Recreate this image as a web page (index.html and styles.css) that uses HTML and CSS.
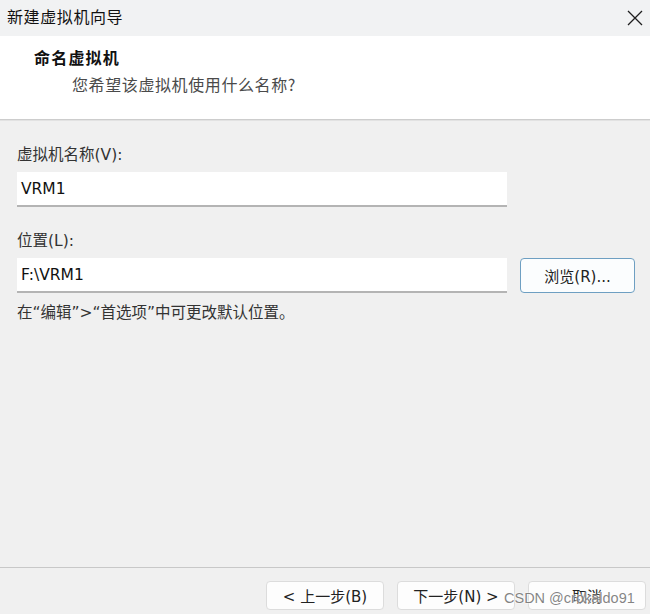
FILE: index.html
```html
<!DOCTYPE html>
<html lang="zh-CN">
<head>
<meta charset="utf-8">
<title>新建虚拟机向导</title>
<link rel="stylesheet" href="styles.css">
</head>
<body>
<div class="window">
  <div class="titlebar">
    <span class="title">新建虚拟机向导</span>
    <svg class="close" width="16" height="16" viewBox="0 0 16 16" aria-hidden="true">
      <path d="M1 1 L15 15 M15 1 L1 15" stroke="#1e1e1e" stroke-width="1.3" fill="none"/>
    </svg>
  </div>
  <div class="header">
    <div class="h-title">命名虚拟机</div>
    <div class="h-sub">您希望该虚拟机使用什么名称?</div>
  </div>
  <div class="content">
    <div class="label label-first">虚拟机名称(V):</div>
    <div class="row">
      <div class="input">VRM1</div>
    </div>
    <div class="label label-second">位置(L):</div>
    <div class="row">
      <div class="input">F:\VRM1</div>
      <button class="browse">浏览(R)...</button>
    </div>
    <div class="hint">在“编辑”&gt;“首选项”中可更改默认位置。</div>
  </div>
  <div class="footer">
    <button class="btn">&lt; 上一步(B)</button>
    <button class="btn">下一步(N) &gt;</button>
    <button class="btn">取消</button>
    <span class="watermark">CSDN @crokaldo91</span>
  </div>
</div>
</body>
</html>
```
FILE: styles.css
```css
html, body {
  margin: 0;
  padding: 0;
}
body {
  background: #f0f0f0;
  font-family: "DejaVu Sans", "Noto Sans CJK SC", sans-serif;
  color: #1a1a1a;
}
.window {
  width: 650px;
  height: 614px;
  display: flex;
  flex-direction: column;
  overflow: hidden;
  position: relative;
}
.titlebar {
  height: 36px;
  background: #f1f2f3;
  display: flex;
  align-items: center;
  justify-content: space-between;
  padding: 0 7px 4px 7px;
  box-sizing: border-box;
}
.title {
  font-family: "Noto Sans CJK SC", sans-serif;
  font-size: 16px;
  color: #111;
  letter-spacing: 0.6px;
}
.close {
  margin-top: 4px;
}
.header {
  height: 84px;
  background: #ffffff;
  border-bottom: 1px solid #cdcdcd;
  box-shadow: 0 1px 0 #e2e2e2;
  box-sizing: border-box;
  padding-top: 9px;
}
.h-title {
  font-family: "Noto Sans CJK SC", sans-serif;
  font-weight: 700;
  font-size: 16px;
  line-height: 24px;
  padding-left: 34px;
  letter-spacing: 1.2px;
  color: #111;
}
.h-sub {
  font-family: "Noto Sans CJK SC", sans-serif;
  font-size: 16px;
  line-height: 24px;
  margin-top: 3px;
  padding-left: 72px;
  color: #4a4a4a;
  letter-spacing: 0.6px;
}
.content {
  flex: 1;
  padding: 23px 0 0 17px;
  display: flex;
  flex-direction: column;
}
.label {
  font-family: "DejaVu Sans", "Noto Sans CJK SC", sans-serif;
  font-size: 15.5px;
  line-height: 24px;
  color: #333;
}
.label-second {
  margin-top: 22px;
}
.row {
  display: flex;
  align-items: center;
  gap: 13px;
  margin-top: 5px;
}
.input {
  width: 490px;
  height: 35px;
  background: #fff;
  border-bottom: 2px solid #b4b4b4;
  box-sizing: border-box;
  padding: 5px 0 0 4px;
  font-size: 15.5px;
  line-height: 24px;
  color: #111;
}
.browse {
  width: 115px;
  height: 35px;
  background: #fbfdfe;
  border: 1px solid #6e9fc2;
  border-radius: 4px;
  font-family: "DejaVu Sans", "Noto Sans CJK SC", sans-serif;
  font-size: 15px;
  color: #222;
  padding: 0;
}
.hint {
  font-family: "DejaVu Sans", "Noto Sans CJK SC", sans-serif;
  font-size: 15.5px;
  line-height: 24px;
  margin-top: 8px;
  color: #333;
}
.footer {
  height: 47px;
  border-top: 1px solid #c8c8c8;
  box-sizing: border-box;
  display: flex;
  align-items: flex-start;
  justify-content: flex-end;
  gap: 13px;
  padding: 13px 4px 0 0;
  position: relative;
}
.btn {
  width: 118px;
  height: 29px;
  background: #fdfdfd;
  border: 1px solid #dcdcdc;
  border-radius: 4px;
  font-family: "DejaVu Sans", "Noto Sans CJK SC", sans-serif;
  font-size: 15px;
  color: #222;
  padding: 0;
}
.watermark {
  position: absolute;
  left: 504px;
  top: 22px;
  font-family: "Liberation Sans", sans-serif;
  font-size: 14.5px;
  color: rgba(110, 110, 110, 0.85);
  text-shadow: 0 0 2px #fff, 0 0 2px #fff;
  white-space: nowrap;
}
```
